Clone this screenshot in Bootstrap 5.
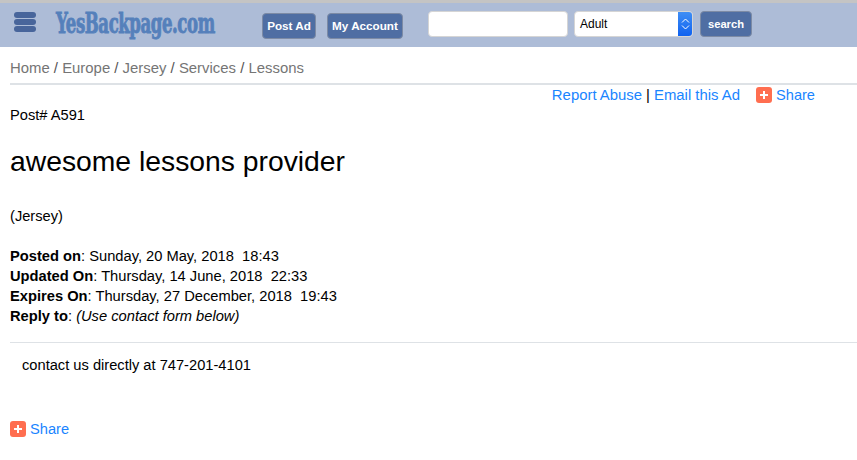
<!DOCTYPE html>
<html lang="en"><head><meta charset="utf-8"><title>Ad</title>
<link href="https://cdn.jsdelivr.net/npm/bootstrap@5.3.0/dist/css/bootstrap.min.css" rel="stylesheet">
<style>
body{font-family:"Liberation Sans",Arial,sans-serif;font-size:14.67px;line-height:20px;color:#000;background:#fff;overflow:hidden}
a{color:#1a85ff;text-decoration:none}
.topbar{height:47px;background:#adbcd7;border-top:3px solid #c4c4c4;padding-left:14px}
.burger{width:22px;gap:1px;margin-top:9px}
.burger i{display:block;height:6px;border-radius:3px;background:#48659b}
.logowrap{margin-left:20px;width:161px;margin-top:4px;height:34px;overflow:visible}
.logo{display:inline-block;font-family:"DejaVu Serif Condensed","DejaVu Serif",serif;font-weight:700;font-size:28px;line-height:34px;color:#5580bb;letter-spacing:-.6px;white-space:nowrap;-webkit-text-stroke:.9px #5580bb;transform:scaleX(.655);transform-origin:0 50%}
.hbtn{background:#4f6ea3;color:#fff;font-weight:700;font-size:11.7px;line-height:16px;padding:4px 0;height:26px;border:1px solid #7d8ba5;border-radius:4px;margin-top:10px;white-space:nowrap;text-align:center}
.hbtn:hover{background:#4f6ea3;color:#fff}
.b1{margin-left:45px;width:54px}
.b2{margin-left:11px;width:76px}
.sinput{width:140px;height:26px;margin-left:25px;margin-top:8px;border:1px solid #d5d5d5;border-radius:4px;background:#fff}
.sselect{width:119px;height:26px;margin-left:6px;margin-top:8px;background:#fff;border:1px solid #d5d5d5;border-radius:4px;font-size:12px;line-height:24px;padding-left:5px;overflow:hidden}
.sarrow{width:15px;background:linear-gradient(#3f8ef5,#0f62f0);margin-right:-1px;height:100%}
.b3{margin-left:7px;margin-top:8px;width:52px;font-size:11.2px}
.crumbs{color:#555;font-size:14.9px;padding:11px 0 0;height:38px;margin-left:10px;border-bottom:2px solid #dee2e6;line-height:20px}
.crumbs a{color:#757575}
.toplinks{height:20px;padding-right:42px;font-size:14.9px}
.plus{width:16px;height:16px;border-radius:3px;background:#ff6e50}
.share{gap:4px}
.gapl{margin-left:16px;font-size:14.6px}
.postno{margin-left:10px}
.ttl{font-size:28.3px;line-height:34px;font-weight:400;margin:19px 0 0 10px;font-family:"Liberation Sans",sans-serif}
.loc{margin:28px 0 0 10px}
.meta{margin:20px 0 0 10px;font-size:14.7px}
.rule{margin:16px 0 0 10px;height:1px;background:#dee2e6;border:0;opacity:1}
.desc{margin:12px 0 0 22px}
.bshare{margin:44px 0 0 10px}
</style></head><body>
<header class="topbar d-flex align-items-start">
  <div class="burger d-flex flex-column"><i></i><i></i><i></i></div>
  <div class="logowrap"><span class="logo">YesBackpage.com</span></div>
  <a class="btn hbtn b1" href="#">Post Ad</a>
  <a class="btn hbtn b2" href="#">My Account</a>
  <div class="sinput"></div>
  <div class="sselect d-flex justify-content-between"><span>Adult</span><span class="sarrow d-flex align-items-center justify-content-center"><svg width="9" height="14" viewBox="0 0 9 14" fill="none" stroke="#fff" stroke-width="1"><path d="M1 5.5 4.5 2 8 5.5M1 8.5 4.5 12 8 8.5"/></svg></span></div>
  <a class="btn hbtn b3" href="#">search</a>
</header>
<nav class="crumbs"><a href="#">Home</a> / <a href="#">Europe</a> / <a href="#">Jersey</a> / <a href="#">Services</a> / <a href="#">Lessons</a></nav>
<div class="toplinks d-flex justify-content-end align-items-center">
  <a href="#">Report Abuse</a><span class="mx-1"> | </span><a href="#">Email this Ad</a>
  <a class="share gapl d-flex align-items-center" href="#"><span class="plus d-flex align-items-center justify-content-center"><svg width="10" height="10" viewBox="0 0 10 10"><path d="M4 1h2v3h3v2H6v3H4V6H1V4h3z" fill="#fff"/></svg></span>Share</a>
</div>
<div class="postno">Post# A591</div>
<h1 class="ttl">awesome lessons provider</h1>
<div class="loc">(Jersey)</div>
<div class="meta">
  <div><b>Posted on</b>: Sunday, 20 May, 2018&nbsp; 18:43</div>
  <div><b>Updated On</b>: Thursday, 14 June, 2018&nbsp; 22:33</div>
  <div><b>Expires On</b>: Thursday, 27 December, 2018&nbsp; 19:43</div>
  <div><b>Reply to</b>: <i>(Use contact form below)</i></div>
</div>
<hr class="rule">
<div class="desc">contact us directly at 747-201-4101</div>
<div class="bshare"><a class="share d-inline-flex align-items-center" href="#"><span class="plus d-flex align-items-center justify-content-center"><svg width="10" height="10" viewBox="0 0 10 10"><path d="M4 1h2v3h3v2H6v3H4V6H1V4h3z" fill="#fff"/></svg></span>Share</a></div>
<script src="https://cdn.jsdelivr.net/npm/bootstrap@5.3.0/dist/js/bootstrap.bundle.min.js"></script>
</body></html>
